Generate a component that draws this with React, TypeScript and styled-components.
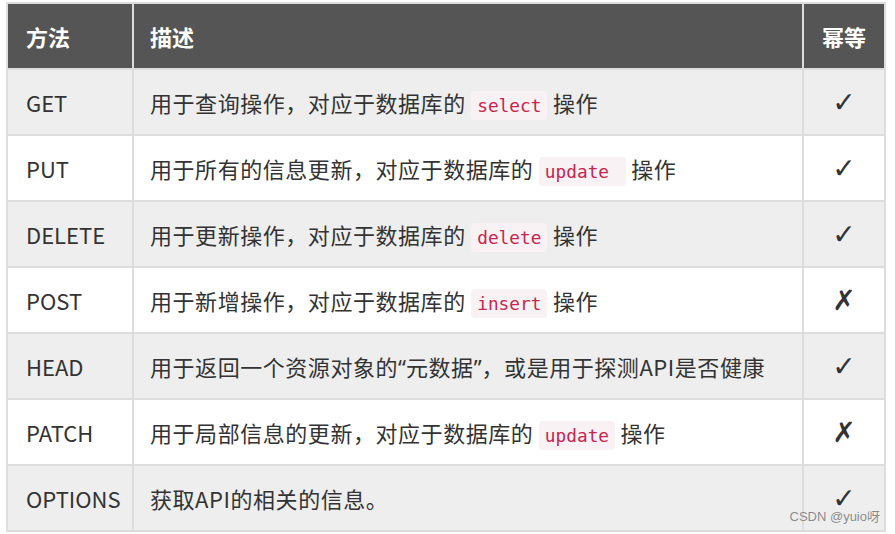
import React from "react";
import styled, { createGlobalStyle } from "styled-components";

/* Styles */
const GlobalStyle = createGlobalStyle`
  body {
    margin: 0;
    background: #fff;
    font-family: "Noto Sans CJK SC", "Noto Sans", sans-serif;
  }
`;

const Page = styled.main`
  position: relative;
  width: 895px;
  height: 534px;
  padding: 2px 0 0 6px;
  box-sizing: border-box;
  overflow: hidden;
`;

const Grid = styled.div`
  display: grid;
  grid-template-columns: 126px 670px 82px;
  grid-auto-rows: 66px;
  width: fit-content;
  border-left: 2px solid #dddddd;
  border-top: 2px solid #dddddd;
`;

const Cell = styled.div<{ $head?: boolean; $shade?: boolean; $center?: boolean; $pad?: number }>`
  display: flex;
  align-items: center;
  justify-content: ${(p) => (p.$center ? "center" : "flex-start")};
  box-sizing: border-box;
  padding-left: ${(p) => (p.$center ? 0 : p.$pad ?? 16)}px;
  border-right: 2px solid #dddddd;
  border-bottom: 2px solid #dddddd;
  background: ${(p) => (p.$head ? "#555555" : p.$shade ? "#eeeeee" : "#ffffff")};
  color: ${(p) => (p.$head ? "#ffffff" : "#333333")};
  font-size: 22px;
  font-weight: ${(p) => (p.$head ? 700 : 400)};
  white-space: nowrap;
`;

const Desc = styled.span`
  letter-spacing: 0.55px;
`;

const Quote = styled.span`
  font-family: "Noto Sans", sans-serif;
  letter-spacing: 0;
`;

const Code = styled.code`
  font-family: "DejaVu Sans Mono", "Liberation Mono", monospace;
  font-size: 17.8px;
  letter-spacing: 0;
  color: #c7254e;
  background: #f9f2f4;
  border-radius: 4px;
  padding: 4px 6px;
  white-space: pre;
`;

const Mark = styled.span`
  font-family: "DejaVu Sans", sans-serif;
  font-size: 28px;
  color: #333333;
`;

const Watermark = styled.span`
  position: absolute;
  right: 15px;
  bottom: 9px;
  font-family: "Liberation Sans", "Noto Sans CJK SC", sans-serif;
  font-size: 13px;
  color: rgba(120, 120, 120, 0.85);
`;

type Row = { method: string; text: React.ReactNode; code?: string; idem: boolean };

const rows: Row[] = [
  { method: "GET", text: "用于查询操作，对应于数据库的 ", code: "select", idem: true },
  { method: "PUT", text: "用于所有的信息更新，对应于数据库的 ", code: "update ", idem: true },
  { method: "DELETE", text: "用于更新操作，对应于数据库的 ", code: "delete", idem: true },
  { method: "POST", text: "用于新增操作，对应于数据库的 ", code: "insert", idem: false },
  {
    method: "HEAD",
    text: (
      <>
        用于返回一个资源对象的<Quote>“</Quote>元数据<Quote>”</Quote>，或是用于探测API是否健康
      </>
    ),
    idem: true,
  },
  { method: "PATCH", text: "用于局部信息的更新，对应于数据库的 ", code: "update", idem: false },
  { method: "OPTIONS", text: "获取API的相关的信息。", idem: true },
];

const App = () => {
  return (
    <Page>
      <GlobalStyle />
      <Grid>
        <Cell $head $pad={18}>方法</Cell>
        <Cell $head>描述</Cell>
        <Cell $head $center>幂等</Cell>
        {rows.map((row, i) => (
          <React.Fragment key={row.method}>
            <Cell $shade={i % 2 === 0} $pad={18}>{row.method}</Cell>
            <Cell $shade={i % 2 === 0}>
              <Desc>
                {row.text}
                {row.code && (
                  <>
                    <Code>{row.code}</Code> 操作
                  </>
                )}
              </Desc>
            </Cell>
            <Cell $shade={i % 2 === 0} $center>
              <Mark>{row.idem ? "✓" : "✗"}</Mark>
            </Cell>
          </React.Fragment>
        ))}
      </Grid>
      <Watermark>CSDN @yuio呀</Watermark>
    </Page>
  );
};

export default App;
